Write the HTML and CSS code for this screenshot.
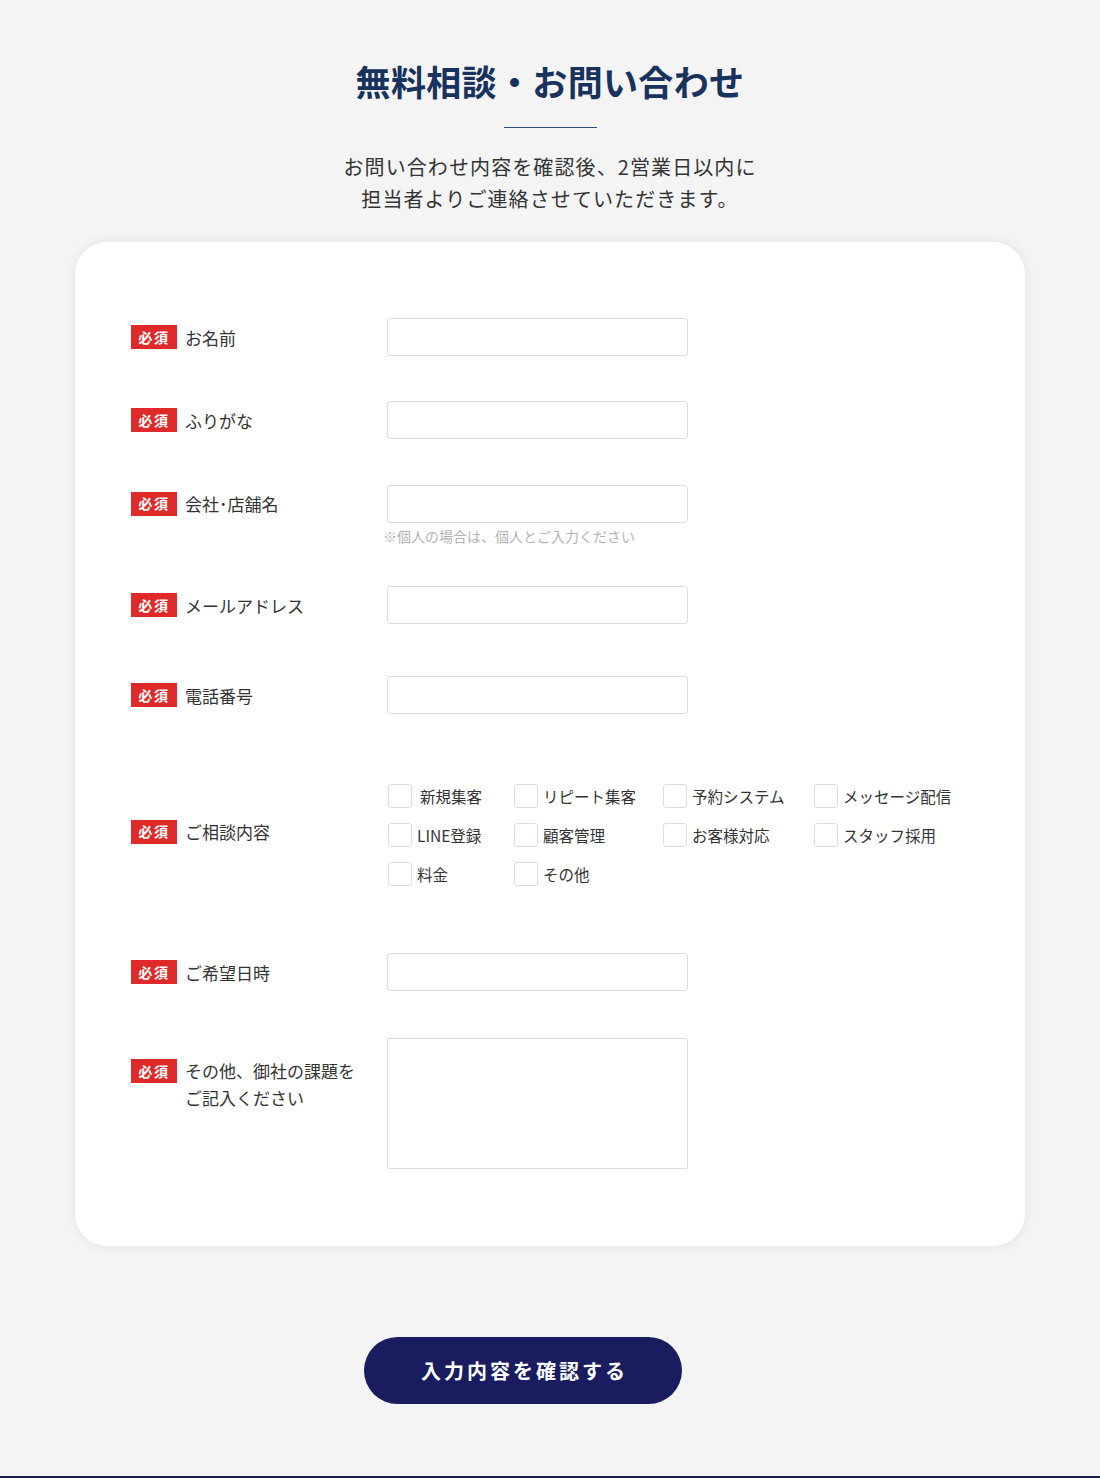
FILE: index.html
```html
<!DOCTYPE html>
<html lang="ja">

<head>
    <meta charset="UTF-8">
    <meta name="viewport" content="width=device-width, initial-scale=1.0">
    <title>無料相談・お問い合わせ</title>
    <link rel="stylesheet" href="styles.css">
</head>

<body>
    <section class="contact">
        <!-- 見出し -->
        <h1 class="contact-title">無料相談・お問い合わせ</h1>
        <div class="contact-line"></div>
        <p class="contact-lead">お問い合わせ内容を確認後、2営業日以内に<br>担当者よりご連絡させていただきます。</p>

        <!-- フォーム本体 -->
        <form class="form-card">
            <div class="form-row">
                <div class="form-label"><span class="badge">必須</span><span>お名前</span></div>
                <div class="form-field"><input type="text" class="form-input"></div>
            </div>

            <div class="form-row">
                <div class="form-label"><span class="badge">必須</span><span>ふりがな</span></div>
                <div class="form-field"><input type="text" class="form-input"></div>
            </div>

            <div class="form-row form-row--top form-row--company">
                <div class="form-label form-label--input"><span class="badge">必須</span><span>会社･店舗名</span></div>
                <div class="form-field">
                    <input type="text" class="form-input">
                    <p class="form-note">※個人の場合は、個人とご入力ください</p>
                </div>
            </div>

            <div class="form-row form-row--after-note">
                <div class="form-label"><span class="badge">必須</span><span>メールアドレス</span></div>
                <div class="form-field"><input type="email" class="form-input"></div>
            </div>

            <div class="form-row form-row--tel">
                <div class="form-label"><span class="badge">必須</span><span>電話番号</span></div>
                <div class="form-field"><input type="tel" class="form-input"></div>
            </div>

            <div class="form-row form-row--check">
                <div class="form-label"><span class="badge">必須</span><span>ご相談内容</span></div>
                <div class="form-field">
                    <div class="check-grid">
                        <label class="check-item"><input type="checkbox"><span class="check-box"></span><span class="check-text">新規集客</span></label>
                        <label class="check-item"><input type="checkbox"><span class="check-box"></span><span>リピート集客</span></label>
                        <label class="check-item"><input type="checkbox"><span class="check-box"></span><span>予約システム</span></label>
                        <label class="check-item"><input type="checkbox"><span class="check-box"></span><span>メッセージ配信</span></label>
                        <label class="check-item"><input type="checkbox"><span class="check-box"></span><span>LINE登録</span></label>
                        <label class="check-item"><input type="checkbox"><span class="check-box"></span><span>顧客管理</span></label>
                        <label class="check-item"><input type="checkbox"><span class="check-box"></span><span>お客様対応</span></label>
                        <label class="check-item"><input type="checkbox"><span class="check-box"></span><span>スタッフ採用</span></label>
                        <label class="check-item"><input type="checkbox"><span class="check-box"></span><span>料金</span></label>
                        <label class="check-item"><input type="checkbox"><span class="check-box"></span><span>その他</span></label>
                    </div>
                </div>
            </div>

            <div class="form-row">
                <div class="form-label"><span class="badge">必須</span><span>ご希望日時</span></div>
                <div class="form-field"><input type="text" class="form-input"></div>
            </div>

            <div class="form-row form-row--top form-row--area">
                <div class="form-label form-label--area"><span class="badge">必須</span><span>その他、御社の課題を<br>ご記入ください</span></div>
                <div class="form-field"><textarea class="form-textarea"></textarea></div>
            </div>
        </form>

        <div class="form-submit">
            <button type="button" class="submit-btn">入力内容を確認する</button>
        </div>
    </section>

    <footer class="footer"></footer>
</body>

</html>
```

FILE: styles.css
```css
/* 基本 */
body {
    font-family: "Noto Sans CJK JP", "Noto Sans", sans-serif;
    background-color: #f4f4f4;
    color: #333333;
    margin: 0;
}

.contact {
    padding: 56px 0 72px;
    display: flex;
    flex-direction: column;
    align-items: center;
}

/* 見出し */
.contact-title {
    margin: 0;
    font-size: 35px;
    line-height: 49px;
    font-weight: 700;
    color: #17325c;
    letter-spacing: 0.01em;
}

.contact-line {
    width: 93px;
    height: 1px;
    margin-top: 22px;
    background-color: #2f4b7c;
}

.contact-lead {
    margin: 23px 0 0;
    font-size: 20px;
    line-height: 32px;
    letter-spacing: 1.1px;
    text-align: center;
    color: #333333;
}

/* フォームカード */
.form-card {
    margin-top: 27px;
    width: 950px;
    box-sizing: border-box;
    background-color: #ffffff;
    border-radius: 32px;
    box-shadow: 0 0 12px rgba(0, 0, 0, 0.08);
    padding: 76px 0 77px 56px;
    display: flex;
    flex-direction: column;
}

.form-row {
    display: flex;
    align-items: center;
    margin-top: 45px;
}

.form-row:first-child {
    margin-top: 0;
}

.form-row--top {
    align-items: flex-start;
}

.form-row--company {
    margin-top: 46px;
}

.form-row--after-note {
    margin-top: 41px;
}

.form-row--tel {
    margin-top: 52px;
}

.form-row--check {
    margin-top: 70px;
    margin-bottom: 22px;
}

.form-row--check .form-label {
    margin-top: -7px;
}

.form-row--area {
    margin-top: 47px;
}

.form-label {
    width: 256px;
    flex-shrink: 0;
    display: flex;
    align-items: center;
    font-size: 17px;
    line-height: 27px;
    color: #333333;
}

.form-label--input {
    padding-top: 5px;
}

.form-label--area {
    align-items: flex-start;
    padding-top: 19px;
}

.badge {
    display: inline-flex;
    align-items: center;
    justify-content: center;
    width: 46px;
    height: 24px;
    margin-right: 8px;
    flex-shrink: 0;
    background-color: #e02a2a;
    color: #ffffff;
    font-size: 14px;
    font-weight: 700;
    letter-spacing: 0.12em;
}

.form-label--area .badge {
    margin-top: 2px;
}

.form-input {
    display: block;
    width: 301px;
    height: 38px;
    box-sizing: border-box;
    border: 1px solid #dddddd;
    border-radius: 3px;
    background-color: #ffffff;
    font-family: inherit;
}

.form-textarea {
    display: block;
    width: 301px;
    height: 131px;
    box-sizing: border-box;
    border: 1px solid #dddddd;
    border-radius: 2px;
    resize: none;
    font-family: inherit;
}

.form-note {
    margin: 4px 0 0 -4px;
    font-size: 14px;
    line-height: 18px;
    color: #b3b3b3;
}

/* チェックボックス */
.check-grid {
    display: grid;
    grid-template-columns: 126px 149px 151px auto;
    row-gap: 15px;
    margin-left: 1px;
}

.check-item {
    display: flex;
    align-items: center;
    font-size: 15.5px;
    line-height: 24px;
    color: #333333;
    cursor: pointer;
}

.check-item input {
    display: none;
}

.check-box {
    width: 24px;
    height: 24px;
    box-sizing: border-box;
    border: 1px solid #dddddd;
    border-radius: 3px;
    margin-right: 5px;
    flex-shrink: 0;
}

.check-text {
    margin-left: 3px;
}

/* 送信ボタン */
.form-submit {
    margin-top: 91px;
    display: flex;
    justify-content: center;
}

.submit-btn {
    width: 318px;
    height: 67px;
    margin-right: 54px;
    border: none;
    border-radius: 34px;
    background-color: #1a1c60;
    color: #ffffff;
    font-family: inherit;
    font-size: 20px;
    font-weight: 700;
    letter-spacing: 0.15em;
    text-indent: 0.15em;
    cursor: pointer;
}

.footer {
    height: 40px;
    background-color: #1c1f4a;
}
```
